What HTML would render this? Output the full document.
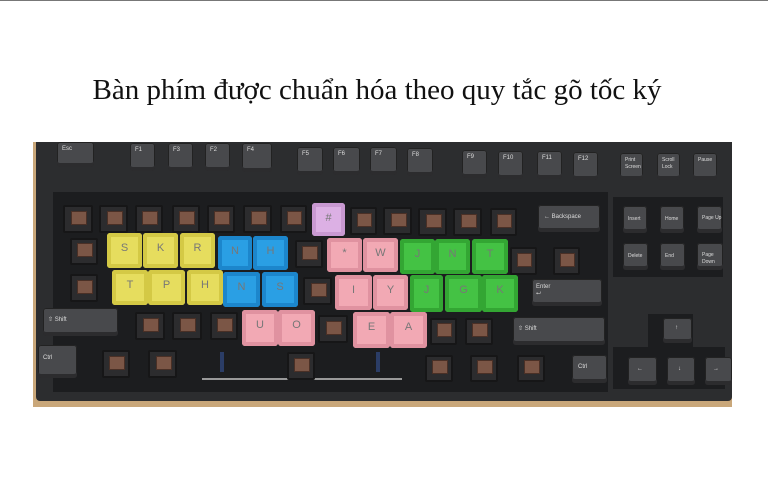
<!DOCTYPE html>
<html><head><meta charset="utf-8"><style>
*{margin:0;padding:0;box-sizing:border-box}
body{width:768px;height:497px;background:#fff;position:relative;overflow:hidden;font-family:"Liberation Sans",sans-serif}
.top{position:absolute;left:0;top:0;width:768px;height:1px;background:#777}
h1{position:absolute;left:0;top:74px;width:754px;text-align:center;font:400 29px "Liberation Serif",serif;color:#111;white-space:nowrap}
.photo{position:absolute;left:33px;top:142px;width:699px;height:265px;background:#c9a77a;overflow:hidden}
.body{position:absolute;left:3px;top:0;width:696px;height:259px;background:#2c2d2f;border-radius:0 0 4px 4px}
.plate{position:absolute;background:#1c1d1f}
div.a{position:absolute}
.k{position:absolute;background:#48494c;border-radius:3px;box-shadow:inset 0 -4px 0 #2c2c2e,inset 0 0 0 1px #222;color:#ddd;font-size:6px;padding:4px 0 0 5px;line-height:7px}
.sw{position:absolute;background:#2c2c2e;border:2px solid #161617;border-radius:2px}
.sw::after{content:"";position:absolute;left:22%;top:15%;width:56%;height:50%;background:#7b5646;border:1px solid #4a3026}
.c{position:absolute;border-radius:3px;text-align:center;font:400 11px "Liberation Sans",sans-serif;color:#777;padding-top:9px}
.y{background:#e6dd5e;box-shadow:inset 0 0 0 4px #d4c945}
.b{background:#2a9fe4;box-shadow:inset 0 0 0 4px #1c86cc}
.p{background:#f2a9b4;box-shadow:inset 0 0 0 4px #e092a0}
.g{background:#44c244;box-shadow:inset 0 0 0 4px #33a633}
.l{background:#dcb0e4;box-shadow:inset 0 0 0 4px #c999d2}
</style></head><body>
<div class="top"></div>
<h1>Bàn phím được chuẩn hóa theo quy tắc gõ tốc ký</h1>
<div class="photo">
<div class="body"></div>
<div class="plate" style="left:20px;top:50px;width:555px;height:200px"></div>
<div class="plate" style="left:580px;top:55px;width:110px;height:80px"></div>
<div class="plate" style="left:580px;top:205px;width:112px;height:42px"></div>
<div class="plate" style="left:615px;top:172px;width:45px;height:35px"></div>
</div>
<!-- F row -->
<div class="k" style="left:57px;top:142px;width:37px;height:25px">Esc</div>
<div class="k" style="left:130px;top:143px;width:25px;height:28px">F1</div>
<div class="k" style="left:168px;top:143px;width:25px;height:28px">F3</div>
<div class="k" style="left:205px;top:143px;width:25px;height:28px">F2</div>
<div class="k" style="left:242px;top:143px;width:30px;height:29px">F4</div>
<div class="k" style="left:297px;top:147px;width:26px;height:28px">F5</div>
<div class="k" style="left:333px;top:147px;width:27px;height:28px">F6</div>
<div class="k" style="left:370px;top:147px;width:27px;height:28px">F7</div>
<div class="k" style="left:407px;top:148px;width:26px;height:28px">F8</div>
<div class="k" style="left:462px;top:150px;width:25px;height:28px">F9</div>
<div class="k" style="left:498px;top:151px;width:25px;height:28px">F10</div>
<div class="k" style="left:537px;top:151px;width:25px;height:28px">F11</div>
<div class="k" style="left:573px;top:152px;width:25px;height:28px">F12</div>
<div class="k" style="left:620px;top:153px;width:23px;height:27px;font-size:5px">Print Screen</div>
<div class="k" style="left:657px;top:153px;width:23px;height:27px;font-size:5px">Scroll Lock</div>
<div class="k" style="left:693px;top:153px;width:24px;height:27px;font-size:5px">Pause</div>
<!-- row1 -->
<div class="sw" style="left:63px;top:205px;width:30px;height:28px"></div>
<div class="sw" style="left:99px;top:205px;width:29px;height:28px"></div>
<div class="sw" style="left:135px;top:205px;width:28px;height:28px"></div>
<div class="sw" style="left:172px;top:205px;width:28px;height:28px"></div>
<div class="sw" style="left:207px;top:205px;width:28px;height:28px"></div>
<div class="sw" style="left:243px;top:205px;width:29px;height:28px"></div>
<div class="sw" style="left:280px;top:205px;width:27px;height:28px"></div>
<div class="c l" style="left:312px;top:203px;width:33px;height:33px">#</div>
<div class="sw" style="left:350px;top:207px;width:27px;height:28px"></div>
<div class="sw" style="left:383px;top:207px;width:29px;height:28px"></div>
<div class="sw" style="left:418px;top:208px;width:29px;height:28px"></div>
<div class="sw" style="left:453px;top:208px;width:29px;height:28px"></div>
<div class="sw" style="left:490px;top:208px;width:27px;height:28px"></div>
<div class="k" style="left:538px;top:205px;width:62px;height:27px;padding:9px 0 0 6px">← Backspace</div>
<div class="k" style="left:623px;top:206px;width:24px;height:27px;font-size:5px;padding-top:10px">Insert</div>
<div class="k" style="left:660px;top:206px;width:24px;height:27px;font-size:5px;padding-top:10px">Home</div>
<div class="k" style="left:697px;top:206px;width:25px;height:27px;font-size:5px;padding-top:9px">Page Up</div>
<!-- row2 -->
<div class="sw" style="left:70px;top:238px;width:28px;height:27px"></div>
<div class="c y" style="left:107px;top:233px;width:35px;height:35px">S</div>
<div class="c y" style="left:143px;top:233px;width:35px;height:35px">K</div>
<div class="c y" style="left:180px;top:233px;width:35px;height:35px">R</div>
<div class="c b" style="left:218px;top:236px;width:34px;height:34px">N</div>
<div class="c b" style="left:253px;top:236px;width:35px;height:34px">H</div>
<div class="sw" style="left:295px;top:240px;width:28px;height:28px"></div>
<div class="c p" style="left:327px;top:238px;width:35px;height:34px">*</div>
<div class="c p" style="left:363px;top:238px;width:35px;height:34px">W</div>
<div class="c g" style="left:400px;top:239px;width:35px;height:35px">J</div>
<div class="c g" style="left:435px;top:239px;width:35px;height:35px">N</div>
<div class="c g" style="left:472px;top:239px;width:36px;height:35px">T</div>
<div class="sw" style="left:510px;top:247px;width:27px;height:28px"></div>
<div class="sw" style="left:553px;top:247px;width:27px;height:28px"></div>
<div class="k" style="left:623px;top:243px;width:25px;height:27px;font-size:5px;padding-top:10px">Delete</div>
<div class="k" style="left:660px;top:243px;width:25px;height:27px;font-size:5px;padding-top:10px">End</div>
<div class="k" style="left:697px;top:243px;width:26px;height:27px;font-size:5px;padding-top:9px">Page Down</div>
<!-- row3 -->
<div class="sw" style="left:70px;top:274px;width:28px;height:28px"></div>
<div class="c y" style="left:112px;top:270px;width:36px;height:35px">T</div>
<div class="c y" style="left:148px;top:270px;width:37px;height:35px">P</div>
<div class="c y" style="left:187px;top:270px;width:36px;height:35px">H</div>
<div class="c b" style="left:223px;top:272px;width:37px;height:35px">N</div>
<div class="c b" style="left:262px;top:272px;width:36px;height:35px">S</div>
<div class="sw" style="left:303px;top:277px;width:29px;height:28px"></div>
<div class="c p" style="left:335px;top:275px;width:37px;height:35px">I</div>
<div class="c p" style="left:373px;top:275px;width:35px;height:35px">Y</div>
<div class="c g" style="left:410px;top:275px;width:33px;height:37px">J</div>
<div class="c g" style="left:445px;top:275px;width:37px;height:37px">G</div>
<div class="c g" style="left:482px;top:275px;width:36px;height:37px">K</div>
<div class="k" style="left:532px;top:279px;width:70px;height:27px;padding:5px 0 0 4px">Enter<br>⮠</div>
<!-- row4 -->
<div class="k" style="left:43px;top:308px;width:75px;height:28px;padding:9px 0 0 5px">⇧ Shift</div>
<div class="sw" style="left:135px;top:312px;width:30px;height:28px"></div>
<div class="sw" style="left:172px;top:312px;width:30px;height:28px"></div>
<div class="sw" style="left:210px;top:312px;width:28px;height:28px"></div>
<div class="c p" style="left:242px;top:310px;width:36px;height:36px">U</div>
<div class="c p" style="left:278px;top:310px;width:37px;height:36px">O</div>
<div class="sw" style="left:318px;top:315px;width:30px;height:28px"></div>
<div class="c p" style="left:353px;top:312px;width:37px;height:36px">E</div>
<div class="c p" style="left:390px;top:312px;width:37px;height:36px">A</div>
<div class="sw" style="left:430px;top:318px;width:27px;height:27px"></div>
<div class="sw" style="left:465px;top:318px;width:28px;height:27px"></div>
<div class="k" style="left:513px;top:317px;width:92px;height:28px;padding:9px 0 0 5px">⇧ Shift</div>
<div class="k" style="left:663px;top:318px;width:29px;height:25px;padding:7px 0 0 12px">↑</div>
<!-- row5 -->
<div class="k" style="left:38px;top:345px;width:39px;height:33px;padding:10px 0 0 5px">Ctrl</div>
<div class="sw" style="left:102px;top:350px;width:28px;height:28px"></div>
<div class="sw" style="left:148px;top:350px;width:29px;height:28px"></div>
<div class="a" style="left:202px;top:378px;width:200px;height:2px;background:#999"></div>
<div class="a" style="left:220px;top:352px;width:4px;height:20px;background:#2b3d66"></div>
<div class="a" style="left:376px;top:352px;width:4px;height:20px;background:#2b3d66"></div>
<div class="sw" style="left:287px;top:352px;width:28px;height:28px"></div>
<div class="sw" style="left:425px;top:355px;width:28px;height:27px"></div>
<div class="sw" style="left:470px;top:355px;width:28px;height:27px"></div>
<div class="sw" style="left:517px;top:355px;width:28px;height:27px"></div>
<div class="k" style="left:572px;top:355px;width:35px;height:28px;padding:9px 0 0 6px">Ctrl</div>
<div class="k" style="left:628px;top:357px;width:29px;height:28px;padding:9px 0 0 9px">←</div>
<div class="k" style="left:667px;top:357px;width:28px;height:28px;padding:9px 0 0 11px">↓</div>
<div class="k" style="left:705px;top:357px;width:27px;height:28px;padding:9px 0 0 8px">→</div>
</body></html>
